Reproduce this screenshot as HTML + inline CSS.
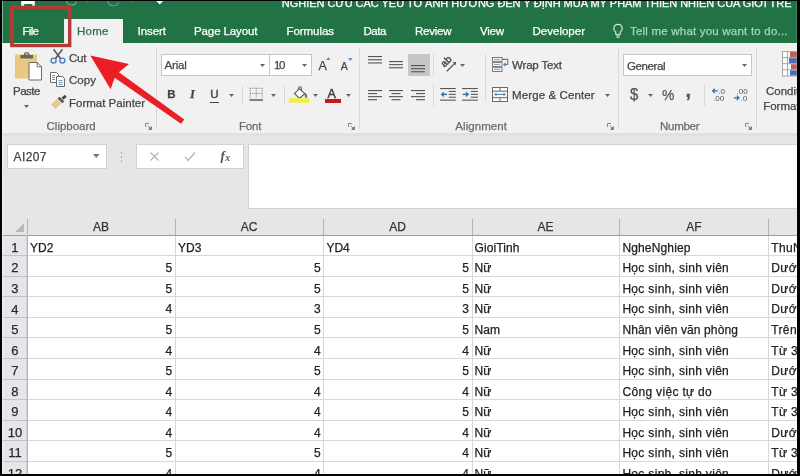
<!DOCTYPE html>
<html lang="vi"><head><meta charset="utf-8"><title>Excel</title><style>
html,body{margin:0;padding:0;background:#000;}
body{width:800px;height:476px;overflow:hidden;position:relative;font-family:"Liberation Sans",sans-serif;}
#app{position:absolute;left:0;top:0;width:797px;height:474px;overflow:hidden;will-change:transform;}
#app div,#app span,.abs{position:absolute;}
span{white-space:nowrap;display:block;-webkit-text-stroke:0.25px currentColor;}
.clip{overflow:hidden;}
svg{display:block;overflow:visible;}
</style></head><body>
<div id="app">
<div style="left:2px;top:1px;width:795px;height:42px;background:#217346;"></div>
<div style="left:2px;top:43px;width:795px;height:90px;background:#f1f1f1;"></div>
<div style="left:2px;top:133px;width:795px;height:3px;background:#e1e1e1;"></div>
<div style="left:2px;top:136px;width:795px;height:100px;background:#e6e6e6;"></div>
<div style="left:2px;top:235px;width:795px;height:239px;background:#fff;"></div>
<div class="clip" style="left:2px;top:1px;width:795px;height:18px;">
<span class="w" style="top:-3.00px;font-size:11px;line-height:11px;color:#fff;left:279.80px;letter-spacing:-0.034px;">NGHIÊN CỨU CÁC YẾU TỐ ẢNH HƯỞNG ĐẾN Ý ĐỊNH MUA MỸ PHẨM THIÊN NHIÊN CỦA GIỚI TRẺ</span>
</div>
<svg class="abs" style="left:0;top:0" width="800" height="20" viewBox="0 0 800 20"><path d="M21.200 1h13.600v4.800h-2.500v-1.800h-8.100v1.800h-3z" fill="#fff"/><path d="M66.500 1a5.200 5.200 0 0 0 10 0.500" fill="none" stroke="#6fae8a" stroke-width="1.100"/><path d="M86.500 1.500h2" stroke="#5c9a78" stroke-width="1"/><path d="M107.500 1a6 6.500 0 0 0 11 1.500" fill="none" stroke="#5fa07c" stroke-width="1.100"/><path d="M131.500 1.500h2" stroke="#4f8f6c" stroke-width="1"/><path d="M156.300 1l3.400 3.600l3.400-3.600z" fill="#fff"/></svg>
<div style="left:64px;top:19px;width:59px;height:24px;background:#f1f1f1;"></div>
<span style="top:26.00px;font-size:11.5px;line-height:11.5px;color:#fff;left:22.50px;letter-spacing:-0.677px;">File</span>
<span style="top:26.00px;font-size:11.5px;line-height:11.5px;color:#36694f;left:77.00px;letter-spacing:0.274px;">Home</span>
<span style="top:26.00px;font-size:11.5px;line-height:11.5px;color:#fff;left:137.50px;letter-spacing:-0.052px;">Insert</span>
<span style="top:26.00px;font-size:11.5px;line-height:11.5px;color:#fff;left:194.00px;letter-spacing:-0.108px;">Page Layout</span>
<span style="top:26.00px;font-size:11.5px;line-height:11.5px;color:#fff;left:286.50px;letter-spacing:-0.061px;">Formulas</span>
<span style="top:26.00px;font-size:11.5px;line-height:11.5px;color:#fff;left:363.50px;letter-spacing:-0.431px;">Data</span>
<span style="top:26.00px;font-size:11.5px;line-height:11.5px;color:#fff;left:415.00px;letter-spacing:-0.241px;">Review</span>
<span style="top:26.00px;font-size:11.5px;line-height:11.5px;color:#fff;left:480.00px;letter-spacing:-0.240px;">View</span>
<span style="top:26.00px;font-size:11.5px;line-height:11.5px;color:#fff;left:532.50px;letter-spacing:0.010px;">Developer</span>
<span style="top:26.00px;font-size:11.5px;line-height:11.5px;color:#a9d6bb;left:630.00px;letter-spacing:0.207px;">Tell me what you want to do...</span>
<svg class="abs" style="left:610px;top:22px" width="16" height="18" viewBox="0 0 16 18"><path d="M8 2.2a4.2 4.2 0 0 0-2.3 7.7v2.3h4.6V9.9A4.2 4.2 0 0 0 8 2.2z" fill="none" stroke="#d6ecdf" stroke-width="1.1"/><path d="M6 13.8h4M6.6 15.4h2.8" stroke="#d6ecdf" stroke-width="1"/></svg>
<div style="left:156px;top:48px;width:1px;height:80.5px;background:#d9d9d9;"></div>
<div style="left:359px;top:48px;width:1px;height:80.5px;background:#d9d9d9;"></div>
<div style="left:618px;top:48px;width:1px;height:80.5px;background:#d9d9d9;"></div>
<div style="left:756px;top:48px;width:1px;height:80.5px;background:#d9d9d9;"></div>
<div style="left:242px;top:86px;width:1px;height:18px;background:#d9d9d9;"></div>
<div style="left:284px;top:86px;width:1px;height:18px;background:#d9d9d9;"></div>
<div style="left:432.5px;top:54px;width:1px;height:22px;background:#d9d9d9;"></div>
<div style="left:432.5px;top:84px;width:1px;height:22px;background:#d9d9d9;"></div>
<div style="left:485px;top:54px;width:1px;height:48px;background:#d9d9d9;"></div>
<div style="left:703.5px;top:84px;width:1px;height:22px;background:#d9d9d9;"></div>
<span style="top:121.00px;font-size:11.5px;line-height:11.5px;color:#6a6a6a;left:46.60px;letter-spacing:-0.028px;">Clipboard</span>
<span style="top:121.00px;font-size:11.5px;line-height:11.5px;color:#6a6a6a;left:239.00px;letter-spacing:-0.171px;">Font</span>
<span style="top:121.00px;font-size:11.5px;line-height:11.5px;color:#6a6a6a;left:455.30px;letter-spacing:0.070px;">Alignment</span>
<span style="top:121.00px;font-size:11.5px;line-height:11.5px;color:#6a6a6a;left:660.00px;letter-spacing:-0.281px;">Number</span>
<svg class="abs" style="left:145px;top:122.600px" width="7" height="7" viewBox="0 0 8 8"><path d="M0.5 4.5V0.5H4.5" fill="none" stroke="#777" stroke-width="1"/><path d="M3 3l4 4M7.4 4.2V7.4H4.2z" stroke="#777" stroke-width="1" fill="#777"/></svg>
<svg class="abs" style="left:348px;top:122.600px" width="7" height="7" viewBox="0 0 8 8"><path d="M0.5 4.5V0.5H4.5" fill="none" stroke="#777" stroke-width="1"/><path d="M3 3l4 4M7.4 4.2V7.4H4.2z" stroke="#777" stroke-width="1" fill="#777"/></svg>
<svg class="abs" style="left:607.2px;top:122.600px" width="7" height="7" viewBox="0 0 8 8"><path d="M0.5 4.5V0.5H4.5" fill="none" stroke="#777" stroke-width="1"/><path d="M3 3l4 4M7.4 4.2V7.4H4.2z" stroke="#777" stroke-width="1" fill="#777"/></svg>
<svg class="abs" style="left:744.8px;top:122.600px" width="7" height="7" viewBox="0 0 8 8"><path d="M0.5 4.5V0.5H4.5" fill="none" stroke="#777" stroke-width="1"/><path d="M3 3l4 4M7.4 4.2V7.4H4.2z" stroke="#777" stroke-width="1" fill="#777"/></svg>
<span style="top:86.00px;font-size:11.5px;line-height:11.5px;color:#444;left:13.00px;letter-spacing:-0.527px;">Paste</span>
<span style="top:53.00px;font-size:11.5px;line-height:11.5px;color:#444;left:69.00px;letter-spacing:-0.198px;">Cut</span>
<span style="top:75.00px;font-size:11.5px;line-height:11.5px;color:#444;left:69.00px;letter-spacing:0.051px;">Copy</span>
<span style="top:98.00px;font-size:11.5px;line-height:11.5px;color:#444;left:69.00px;">Format Painter</span>
<svg class="abs" style="left:23.50px;top:105.00px" width="5" height="3" viewBox="0 0 5 3"><path d="M0 0h5l-2.5 3z" fill="#666"/></svg>
<svg class="abs" style="left:13px;top:49px" width="32" height="34" viewBox="0 0 32 34"><rect x="2" y="5.6" width="22" height="24" rx="1" fill="#ebc87f"/><path d="M7.400 9.400V6h3.400a2.900 2.900 0 0 1 5.800 0H20V9.400z" fill="#666"/><circle cx="13.700" cy="4.900" r="1.100" fill="#ebc87f"/><path d="M16 13.5h8.2l4.3 4.3V31H16z" fill="#fff" stroke="#6a6a6a" stroke-width="1"/><path d="M24.2 13.5v4.3h4.3" fill="none" stroke="#6a6a6a" stroke-width="1"/></svg>
<svg class="abs" style="left:49px;top:48px" width="18" height="17" viewBox="0 0 18 17"><path d="M4.5 1.2l7 9.3M13.5 1.2l-7 9.3" stroke="#5a5a5a" stroke-width="1.6" fill="none"/><circle cx="4.6" cy="12.6" r="2.5" fill="none" stroke="#4b7fb8" stroke-width="1.4"/><circle cx="13.4" cy="12.6" r="2.5" fill="none" stroke="#4b7fb8" stroke-width="1.4"/></svg>
<svg class="abs" style="left:49px;top:71px" width="18" height="17" viewBox="0 0 18 17"><path d="M1.5 1.5h6l2 2v8h-8z" fill="#fff" stroke="#6a6a6a" stroke-width="1"/><path d="M7.5 5.5h6l2 2v8h-8z" fill="#fff" stroke="#6a6a6a" stroke-width="1"/><path d="M3 4.5h3M3 6.5h3M3 8.5h3M9.5 9.5h4M9.5 11.5h4M9.5 13.5h4" stroke="#5b86b8" stroke-width="0.9"/></svg>
<svg class="abs" style="left:49px;top:93px" width="19" height="17" viewBox="0 0 19 17"><path d="M2 11.5l6-5.5l4.5 4.5l-6 5.5z" fill="#e8c98d"/><path d="M8.5 5.5l2-1.8l4.8 4.8l-2 1.8z" fill="#555"/><path d="M12.5 4.8l3.2-3l2 2l-3.2 3z" fill="#444"/></svg>
<div style="left:161px;top:54px;width:151px;height:22px;background:#fff;border:1px solid #c6c6c6;box-sizing:border-box;"></div>
<div style="left:269px;top:54px;width:1px;height:22px;background:#c6c6c6;"></div>
<span style="top:60.00px;font-size:11.5px;line-height:11.5px;color:#444;left:164.40px;letter-spacing:-0.127px;">Arial</span>
<span style="top:60.00px;font-size:11.5px;line-height:11.5px;color:#444;left:274.00px;letter-spacing:-1.292px;">10</span>
<svg class="abs" style="left:260.00px;top:64.00px" width="5" height="3" viewBox="0 0 5 3"><path d="M0 0h5l-2.5 3z" fill="#666"/></svg>
<svg class="abs" style="left:302.00px;top:64.00px" width="5" height="3" viewBox="0 0 5 3"><path d="M0 0h5l-2.5 3z" fill="#666"/></svg>
<span style="top:60.00px;font-size:12.5px;line-height:12.5px;color:#444;left:318.50px;">A</span>
<span style="top:61.00px;font-size:10.5px;line-height:10.5px;color:#444;left:340.80px;">A</span>
<svg class="abs" style="left:325.800px;top:57.400px" width="4.600" height="3" viewBox="0 0 6 4"><path d="M0 4l3-4l3 4z" fill="#5b8fc9"/></svg>
<svg class="abs" style="left:347.800px;top:58px" width="4.600" height="3" viewBox="0 0 6 4"><path d="M0 0h6l-3 4z" fill="#5b8fc9"/></svg>
<span style="top:89.00px;font-size:11.5px;line-height:11.5px;color:#444;left:167.30px;font-weight:bold;">B</span>
<span style="top:88.00px;font-size:12.5px;line-height:12.5px;color:#444;left:190.00px;font-family:'Liberation Serif',serif;font-style:italic;font-weight:bold;">I</span>
<span style="top:89.00px;font-size:11.5px;line-height:11.5px;color:#444;left:210.30px;border-bottom:1px solid #444;padding-bottom:1px;-webkit-text-stroke:0.4px #444;">U</span>
<svg class="abs" style="left:228.50px;top:94.00px" width="5" height="3" viewBox="0 0 5 3"><path d="M0 0h5l-2.5 3z" fill="#666"/></svg>
<svg class="abs" style="left:249px;top:87px" width="16" height="15" viewBox="0 0 16 15"><path d="M1.200 1.200h12M1.200 1.200v10.500M13.200 1.200v10.500M7.200 1.200v10.500M1.200 6.500h12" stroke="#7a7a7a" stroke-width="1" stroke-dasharray="1 1.100" fill="none"/><path d="M0.500 13h13.500" stroke="#444" stroke-width="1.300"/></svg>
<svg class="abs" style="left:270.90px;top:94.00px" width="5" height="3" viewBox="0 0 5 3"><path d="M0 0h5l-2.5 3z" fill="#666"/></svg>
<svg class="abs" style="left:289px;top:85px" width="22" height="20" viewBox="0 0 22 20"><path d="M5.500 8.400l5.200-4.700l5 5l-5.200 4.700z" fill="#fff" stroke="#555" stroke-width="1.100"/><path d="M9.300 5V3.300a1.600 1.600 0 0 1 3.200 0V6.300" fill="none" stroke="#555" stroke-width="1"/><path d="M16 7.200q3.200 3.200 1.900 5.600q-1.900 0.800-2.300-1.800z" fill="#5279a8"/><rect x="0" y="13.200" width="20.100" height="4.500" fill="#f1f03a"/></svg>
<svg class="abs" style="left:313.00px;top:94.00px" width="5" height="3" viewBox="0 0 5 3"><path d="M0 0h5l-2.5 3z" fill="#666"/></svg>
<span style="top:88.00px;font-size:12.5px;line-height:12.5px;color:#444;left:327.60px;-webkit-text-stroke:0.5px #444;">A</span>
<div style="left:325px;top:98.5px;width:15.9px;height:4px;background:#c8171e;"></div>
<svg class="abs" style="left:346.30px;top:94.00px" width="5" height="3" viewBox="0 0 5 3"><path d="M0 0h5l-2.5 3z" fill="#666"/></svg>
<div style="left:407.5px;top:54px;width:22px;height:21.5px;background:#c6c6c6;"></div>
<svg class="abs" style="left:368px;top:56.2px" width="14" height="10.6" viewBox="0 0 14 10.6"><rect x="0" y="0.00" width="14" height="1.1" fill="#555"/><rect x="0" y="3.20" width="14" height="1.1" fill="#555"/><rect x="0" y="6.40" width="14" height="1.1" fill="#555"/></svg>
<svg class="abs" style="left:389.3px;top:61px" width="14" height="10.3" viewBox="0 0 14 10.3"><rect x="0" y="0.00" width="14" height="1.1" fill="#555"/><rect x="0" y="3.10" width="14" height="1.1" fill="#555"/><rect x="0" y="6.20" width="14" height="1.1" fill="#555"/></svg>
<svg class="abs" style="left:411.3px;top:65.2px" width="14" height="10.3" viewBox="0 0 14 10.3"><rect x="0" y="0.00" width="14" height="1.1" fill="#555"/><rect x="0" y="3.10" width="14" height="1.1" fill="#555"/><rect x="0" y="6.20" width="14" height="1.1" fill="#555"/></svg>
<svg class="abs" style="left:368px;top:90.2px" width="14" height="13.2" viewBox="0 0 14 13.2"><rect x="0" y="0.00" width="14" height="1.1" fill="#555"/><rect x="0" y="3.05" width="9" height="1.1" fill="#555"/><rect x="0" y="6.10" width="14" height="1.1" fill="#555"/><rect x="0" y="9.15" width="9" height="1.1" fill="#555"/></svg>
<svg class="abs" style="left:389.3px;top:90.2px" width="14" height="13.2" viewBox="0 0 14 13.2"><rect x="0.0" y="0.00" width="14" height="1.1" fill="#555"/><rect x="2.5" y="3.05" width="9" height="1.1" fill="#555"/><rect x="0.0" y="6.10" width="14" height="1.1" fill="#555"/><rect x="2.5" y="9.15" width="9" height="1.1" fill="#555"/></svg>
<svg class="abs" style="left:411px;top:90.2px" width="14" height="13.2" viewBox="0 0 14 13.2"><rect x="0" y="0.00" width="14" height="1.1" fill="#555"/><rect x="5" y="3.05" width="9" height="1.1" fill="#555"/><rect x="0" y="6.10" width="14" height="1.1" fill="#555"/><rect x="5" y="9.15" width="9" height="1.1" fill="#555"/></svg>
<svg class="abs" style="left:436px;top:52px" width="24" height="24" viewBox="436 52 24 24"><text x="0" y="0" font-size="10" font-family="Liberation Sans, sans-serif" fill="#505050" stroke="#505050" stroke-width="0.500" transform="translate(444.600 67.800) rotate(-45)">ab</text><path d="M446.800 71.300L455 63.100" stroke="#555" stroke-width="1.300" fill="none"/><path d="M456.300 61.800l-3.600 0.800l2.800 2.800z" fill="#555"/></svg>
<svg class="abs" style="left:460.30px;top:63.80px" width="5" height="3" viewBox="0 0 5 3"><path d="M0 0h5l-2.5 3z" fill="#666"/></svg>
<svg class="abs" style="left:440.2px;top:88.300px" width="15.8" height="13" viewBox="0 0 15.8 13"><rect x="0" y="0" width="15.8" height="1.100" fill="#5a5a5a"/><rect x="8.800" y="2.9" width="7.0" height="1.100" fill="#5a5a5a"/><rect x="8.800" y="5.8" width="7.0" height="1.100" fill="#5a5a5a"/><rect x="8.800" y="8.7" width="7.0" height="1.100" fill="#5a5a5a"/><rect x="0" y="11.6" width="15.8" height="1.100" fill="#5a5a5a"/><path d="M7 6.350H2.500" stroke="#3f6fa3" stroke-width="1.500" fill="none"/><path d="M0.600 6.350l3.300-2.900v5.800z" fill="#3f6fa3"/></svg>
<svg class="abs" style="left:461.9px;top:88.300px" width="15.8" height="13" viewBox="0 0 15.8 13"><rect x="0" y="0" width="15.8" height="1.100" fill="#5a5a5a"/><rect x="8.800" y="2.9" width="7.0" height="1.100" fill="#5a5a5a"/><rect x="8.800" y="5.8" width="7.0" height="1.100" fill="#5a5a5a"/><rect x="8.800" y="8.7" width="7.0" height="1.100" fill="#5a5a5a"/><rect x="0" y="11.6" width="15.8" height="1.100" fill="#5a5a5a"/><path d="M0.600 6.350H5" stroke="#3f6fa3" stroke-width="1.500" fill="none"/><path d="M7.200 6.350l-3.300-2.900v5.800z" fill="#3f6fa3"/></svg>
<svg class="abs" style="left:492px;top:56.500px" width="18" height="16" viewBox="0 0 18 16"><rect x="0.500" y="0.500" width="9.500" height="3.800" fill="#fafafa" stroke="#6e6e6e" stroke-width="0.900"/><rect x="0.500" y="5.600" width="9.500" height="3.800" fill="#fafafa" stroke="#6e6e6e" stroke-width="0.900"/><rect x="0.500" y="10.700" width="9.500" height="3.800" fill="#fafafa" stroke="#6e6e6e" stroke-width="0.900"/><path d="M2 2.400h6M2 7.500h6M2 12.600h6" stroke="#8a8a8a" stroke-width="0.800"/><path d="M10 2.400h5.800v5.100h-3.600" fill="none" stroke="#4f7fae" stroke-width="1.100"/><path d="M11 7.500l2.600-2.300v4.600z" fill="#4f7fae"/></svg>
<span style="top:60.00px;font-size:11.5px;line-height:11.5px;color:#444;left:512.00px;letter-spacing:-0.168px;">Wrap Text</span>
<svg class="abs" style="left:492px;top:87px" width="16" height="15" viewBox="0 0 16 15"><rect x="0.500" y="0.500" width="15" height="14" fill="#fafafa" stroke="#6a6a6a" stroke-width="1"/><path d="M0.500 4.200h15M0.500 10.700h15M8 0.500v3.700M8 10.700v3.800" stroke="#6a6a6a" stroke-width="1" fill="none"/><path d="M3.500 7.450h9" stroke="#4f7fae" stroke-width="1" fill="none"/><path d="M2.200 7.450l2.200-1.900v3.800zM13.800 7.450l-2.200-1.900v3.800z" fill="#4f7fae"/></svg>
<span style="top:90.00px;font-size:11.5px;line-height:11.5px;color:#444;left:512.00px;letter-spacing:0.117px;">Merge &amp; Center</span>
<svg class="abs" style="left:604.50px;top:94.00px" width="5" height="3" viewBox="0 0 5 3"><path d="M0 0h5l-2.5 3z" fill="#666"/></svg>
<div style="left:623px;top:54px;width:128.5px;height:22px;background:#fff;border:1px solid #c6c6c6;box-sizing:border-box;"></div>
<span style="top:61.00px;font-size:11.5px;line-height:11.5px;color:#444;left:627.00px;letter-spacing:-0.402px;">General</span>
<svg class="abs" style="left:741.50px;top:64.00px" width="5" height="3" viewBox="0 0 5 3"><path d="M0 0h5l-2.5 3z" fill="#666"/></svg>
<span style="top:87.00px;font-size:16px;line-height:16px;color:#555;left:630.00px;transform:scaleX(0.93);transform-origin:0 0;">$</span>
<svg class="abs" style="left:648.00px;top:94.00px" width="5" height="3" viewBox="0 0 5 3"><path d="M0 0h5l-2.5 3z" fill="#666"/></svg>
<span style="top:88.00px;font-size:14.5px;line-height:14.5px;color:#555;left:661.60px;transform:scaleX(0.96);transform-origin:0 0;">%</span>
<span style="top:80.00px;font-size:20px;line-height:20px;color:#555;left:685.50px;font-weight:bold;">,</span>
<svg class="abs" style="left:711px;top:86px" width="17" height="17" viewBox="0 0 17 17"><path d="M6.8 4.800H1.600M3.800 2.600l-2.200 2.200l2.200 2.200" stroke="#2f6db5" stroke-width="1.200" fill="none"/><text x="7.200" y="8" font-size="8" font-family="Liberation Sans, sans-serif" fill="#555">.0</text><text x="2" y="14.800" font-size="8" font-family="Liberation Sans, sans-serif" fill="#555">.00</text></svg>
<svg class="abs" style="left:732.500px;top:86px" width="17" height="17" viewBox="0 0 17 17"><text x="3.500" y="8" font-size="8" font-family="Liberation Sans, sans-serif" fill="#555">.00</text><path d="M0.800 11.800H6M3.800 9.600l2.200 2.200l-2.200 2.200" stroke="#2f6db5" stroke-width="1.200" fill="none"/><text x="7.500" y="14.800" font-size="8" font-family="Liberation Sans, sans-serif" fill="#555">.0</text></svg>
<div class="clip" style="left:757px;top:43px;width:40px;height:90px;">
<svg class="abs" style="left:25px;top:7.500px" width="16" height="26" viewBox="0 0 16 26"><rect x="0.500" y="0.500" width="15" height="24.500" fill="#fff" stroke="#a5a5a5" stroke-width="1"/><path d="M0.500 6.600h15M0.500 12.700h15M0.500 18.800h15M5.500 0.500v24.500" stroke="#a5a5a5" stroke-width="1"/><rect x="8" y="1" width="8" height="5.100" fill="#c0605a"/><rect x="7" y="7.100" width="9" height="5.100" fill="#4a72b0"/><rect x="9" y="13.200" width="7" height="5.100" fill="#c0605a"/><rect x="8" y="19.300" width="8" height="5.200" fill="#4a72b0"/></svg>
<span style="top:43.00px;font-size:11.5px;line-height:11.5px;color:#444;left:9.00px;">Conditional</span>
<span style="top:58.00px;font-size:11.5px;line-height:11.5px;color:#444;left:6.20px;">Formatting</span>
</div>
<div style="left:7px;top:144px;width:100px;height:25px;background:#fff;border:1px solid #d2d2d2;box-sizing:border-box;"></div>
<span style="top:151.00px;font-size:12px;line-height:12px;color:#444;left:13.50px;letter-spacing:0.410px;">AI207</span>
<svg class="abs" style="left:93.45px;top:153.60px" width="6.5" height="4" viewBox="0 0 6.5 4"><path d="M0 0h6.5l-3.25 4z" fill="#777"/></svg>
<div style="left:121px;top:152.4px;width:1.4px;height:1.4px;background:#aaa;"></div>
<div style="left:121px;top:156.4px;width:1.4px;height:1.4px;background:#aaa;"></div>
<div style="left:121px;top:160.4px;width:1.4px;height:1.4px;background:#aaa;"></div>
<div style="left:136px;top:144px;width:108px;height:25px;background:#fff;border:1px solid #d2d2d2;box-sizing:border-box;"></div>
<svg class="abs" style="left:149px;top:150px" width="90" height="14" viewBox="0 0 90 14"><path d="M1.500 2.500l8 8M9.500 2.500l-8 8" stroke="#b4b4b4" stroke-width="1.200" fill="none"/><path d="M36 7l3.200 3.500l6.800-8" stroke="#b4b4b4" stroke-width="1.200" fill="none"/><text x="71.500" y="9.800" font-size="13" font-style="italic" font-weight="bold" font-family="Liberation Serif, serif" fill="#505050">f</text><text x="76.300" y="11" font-size="9.500" font-style="italic" font-weight="bold" font-family="Liberation Serif, serif" fill="#505050">x</text></svg>
<div style="left:247.5px;top:144px;width:550px;height:64.5px;background:#fff;border:1px solid #d2d2d2;border-right:none;box-sizing:border-box;"></div>
<div style="left:2px;top:218.5px;width:795px;height:16.5px;background:#e6e6e6;"></div>
<div style="left:2px;top:234.5px;width:795px;height:1px;background:#9f9f9f;"></div>
<svg class="abs" style="left:14px;top:222px" width="11" height="11" viewBox="0 0 11 11"><path d="M10 1v9H1z" fill="#b8b8b8"/></svg>
<div style="left:27px;top:219px;width:1px;height:16px;background:#b5b5b5;"></div>
<div style="left:175px;top:219px;width:1px;height:16px;background:#b5b5b5;"></div>
<div style="left:323px;top:219px;width:1px;height:16px;background:#b5b5b5;"></div>
<div style="left:472px;top:219px;width:1px;height:16px;background:#b5b5b5;"></div>
<div style="left:619px;top:219px;width:1px;height:16px;background:#b5b5b5;"></div>
<div style="left:768px;top:219px;width:1px;height:16px;background:#b5b5b5;"></div>
<span style="top:221.00px;font-size:12px;line-height:12px;color:#333;left:93.00px;">AB</span>
<span style="top:221.00px;font-size:12px;line-height:12px;color:#333;left:240.86px;">AC</span>
<span style="top:221.00px;font-size:12px;line-height:12px;color:#333;left:389.16px;">AD</span>
<span style="top:221.00px;font-size:12px;line-height:12px;color:#333;left:537.50px;">AE</span>
<span style="top:221.00px;font-size:12px;line-height:12px;color:#333;left:686.13px;">AF</span>
<div style="left:2px;top:235.5px;width:24px;height:239px;background:#e4e6ea;"></div>
<div style="left:26px;top:235px;width:1px;height:239px;background:#d2d4d8;"></div>
<div style="left:27px;top:235px;width:1px;height:239px;background:#b3b5b9;"></div>
<div style="left:28px;top:255px;width:769px;height:1px;background:#d8d8d8;"></div>
<div style="left:2px;top:255px;width:25px;height:1px;background:#c4c4c4;"></div>
<div style="left:28px;top:276px;width:769px;height:1px;background:#d8d8d8;"></div>
<div style="left:2px;top:276px;width:25px;height:1px;background:#c4c4c4;"></div>
<div style="left:28px;top:296px;width:769px;height:1px;background:#d8d8d8;"></div>
<div style="left:2px;top:296px;width:25px;height:1px;background:#c4c4c4;"></div>
<div style="left:28px;top:317px;width:769px;height:1px;background:#d8d8d8;"></div>
<div style="left:2px;top:317px;width:25px;height:1px;background:#c4c4c4;"></div>
<div style="left:28px;top:337px;width:769px;height:1px;background:#d8d8d8;"></div>
<div style="left:2px;top:337px;width:25px;height:1px;background:#c4c4c4;"></div>
<div style="left:28px;top:358px;width:769px;height:1px;background:#d8d8d8;"></div>
<div style="left:2px;top:358px;width:25px;height:1px;background:#c4c4c4;"></div>
<div style="left:28px;top:379px;width:769px;height:1px;background:#d8d8d8;"></div>
<div style="left:2px;top:379px;width:25px;height:1px;background:#c4c4c4;"></div>
<div style="left:28px;top:399px;width:769px;height:1px;background:#d8d8d8;"></div>
<div style="left:2px;top:399px;width:25px;height:1px;background:#c4c4c4;"></div>
<div style="left:28px;top:420px;width:769px;height:1px;background:#d8d8d8;"></div>
<div style="left:2px;top:420px;width:25px;height:1px;background:#c4c4c4;"></div>
<div style="left:28px;top:440px;width:769px;height:1px;background:#d8d8d8;"></div>
<div style="left:2px;top:440px;width:25px;height:1px;background:#c4c4c4;"></div>
<div style="left:28px;top:461px;width:769px;height:1px;background:#d8d8d8;"></div>
<div style="left:2px;top:461px;width:25px;height:1px;background:#c4c4c4;"></div>
<div style="left:175px;top:236px;width:1px;height:238px;background:#d8d8d8;"></div>
<div style="left:323px;top:236px;width:1px;height:238px;background:#d8d8d8;"></div>
<div style="left:472px;top:236px;width:1px;height:238px;background:#d8d8d8;"></div>
<div style="left:619px;top:236px;width:1px;height:238px;background:#d8d8d8;"></div>
<div style="left:768px;top:236px;width:1px;height:238px;background:#d8d8d8;"></div>
<span style="top:241.00px;font-size:13px;line-height:13px;color:#2a2a2a;left:11.28px;">1</span>
<span style="top:261.00px;font-size:13px;line-height:13px;color:#2a2a2a;left:11.28px;">2</span>
<span style="top:282.00px;font-size:13px;line-height:13px;color:#2a2a2a;left:11.28px;">3</span>
<span style="top:303.00px;font-size:13px;line-height:13px;color:#2a2a2a;left:11.28px;">4</span>
<span style="top:323.00px;font-size:13px;line-height:13px;color:#2a2a2a;left:11.28px;">5</span>
<span style="top:344.00px;font-size:13px;line-height:13px;color:#2a2a2a;left:11.28px;">6</span>
<span style="top:364.00px;font-size:13px;line-height:13px;color:#2a2a2a;left:11.28px;">7</span>
<span style="top:385.00px;font-size:13px;line-height:13px;color:#2a2a2a;left:11.28px;">8</span>
<span style="top:405.00px;font-size:13px;line-height:13px;color:#2a2a2a;left:11.28px;">9</span>
<span style="top:426.00px;font-size:13px;line-height:13px;color:#2a2a2a;left:7.67px;">10</span>
<span style="top:446.00px;font-size:13px;line-height:13px;color:#2a2a2a;left:8.15px;">11</span>
<span style="top:467.00px;font-size:13px;line-height:13px;color:#2a2a2a;left:7.67px;">12</span>
<span style="top:242.00px;font-size:12px;line-height:12px;color:#222;left:30.00px;">YD2</span>
<span style="top:242.00px;font-size:12px;line-height:12px;color:#222;left:178.00px;">YD3</span>
<span style="top:242.00px;font-size:12px;line-height:12px;color:#222;left:326.40px;">YD4</span>
<span style="top:242.00px;font-size:12px;line-height:12px;color:#222;left:474.60px;letter-spacing:0.080px;">GioiTinh</span>
<span style="top:242.00px;font-size:12px;line-height:12px;color:#222;left:622.40px;letter-spacing:0.154px;">NgheNghiep</span>
<span style="top:242.00px;font-size:12px;line-height:12px;color:#222;left:771.20px;letter-spacing:0.400px;">ThuNhap</span>
<span style="top:262.00px;font-size:12px;line-height:12px;color:#222;right:624.80px;">5</span>
<span style="top:262.00px;font-size:12px;line-height:12px;color:#222;right:476.40px;">5</span>
<span style="top:262.00px;font-size:12px;line-height:12px;color:#222;right:328.20px;">5</span>
<span style="top:262.00px;font-size:12px;line-height:12px;color:#222;left:474.60px;">Nữ</span>
<span style="top:262.00px;font-size:12px;line-height:12px;color:#222;left:622.40px;letter-spacing:0.316px;">Học sinh, sinh viên</span>
<span style="top:262.00px;font-size:12px;line-height:12px;color:#222;left:771.20px;letter-spacing:0.400px;">Dưới 3 triệu</span>
<span style="top:283.00px;font-size:12px;line-height:12px;color:#222;right:624.80px;">5</span>
<span style="top:283.00px;font-size:12px;line-height:12px;color:#222;right:476.40px;">5</span>
<span style="top:283.00px;font-size:12px;line-height:12px;color:#222;right:328.20px;">5</span>
<span style="top:283.00px;font-size:12px;line-height:12px;color:#222;left:474.60px;">Nữ</span>
<span style="top:283.00px;font-size:12px;line-height:12px;color:#222;left:622.40px;letter-spacing:0.316px;">Học sinh, sinh viên</span>
<span style="top:283.00px;font-size:12px;line-height:12px;color:#222;left:771.20px;letter-spacing:0.400px;">Dưới 3 triệu</span>
<span style="top:303.00px;font-size:12px;line-height:12px;color:#222;right:624.80px;">4</span>
<span style="top:303.00px;font-size:12px;line-height:12px;color:#222;right:476.40px;">3</span>
<span style="top:303.00px;font-size:12px;line-height:12px;color:#222;right:328.20px;">3</span>
<span style="top:303.00px;font-size:12px;line-height:12px;color:#222;left:474.60px;">Nữ</span>
<span style="top:303.00px;font-size:12px;line-height:12px;color:#222;left:622.40px;letter-spacing:0.316px;">Học sinh, sinh viên</span>
<span style="top:303.00px;font-size:12px;line-height:12px;color:#222;left:771.20px;letter-spacing:0.400px;">Dưới 3 triệu</span>
<span style="top:324.00px;font-size:12px;line-height:12px;color:#222;right:624.80px;">5</span>
<span style="top:324.00px;font-size:12px;line-height:12px;color:#222;right:476.40px;">5</span>
<span style="top:324.00px;font-size:12px;line-height:12px;color:#222;right:328.20px;">5</span>
<span style="top:324.00px;font-size:12px;line-height:12px;color:#222;left:474.60px;">Nam</span>
<span style="top:324.00px;font-size:12px;line-height:12px;color:#222;left:622.40px;letter-spacing:0.115px;">Nhân viên văn phòng</span>
<span style="top:324.00px;font-size:12px;line-height:12px;color:#222;left:771.20px;letter-spacing:0.400px;">Trên 10 triệu</span>
<span style="top:345.00px;font-size:12px;line-height:12px;color:#222;right:624.80px;">4</span>
<span style="top:345.00px;font-size:12px;line-height:12px;color:#222;right:476.40px;">4</span>
<span style="top:345.00px;font-size:12px;line-height:12px;color:#222;right:328.20px;">4</span>
<span style="top:345.00px;font-size:12px;line-height:12px;color:#222;left:474.60px;">Nữ</span>
<span style="top:345.00px;font-size:12px;line-height:12px;color:#222;left:622.40px;letter-spacing:0.316px;">Học sinh, sinh viên</span>
<span style="top:345.00px;font-size:12px;line-height:12px;color:#222;left:771.20px;letter-spacing:0.400px;">Từ 3 - 5 triệu</span>
<span style="top:365.00px;font-size:12px;line-height:12px;color:#222;right:624.80px;">5</span>
<span style="top:365.00px;font-size:12px;line-height:12px;color:#222;right:476.40px;">5</span>
<span style="top:365.00px;font-size:12px;line-height:12px;color:#222;right:328.20px;">5</span>
<span style="top:365.00px;font-size:12px;line-height:12px;color:#222;left:474.60px;">Nữ</span>
<span style="top:365.00px;font-size:12px;line-height:12px;color:#222;left:622.40px;letter-spacing:0.316px;">Học sinh, sinh viên</span>
<span style="top:365.00px;font-size:12px;line-height:12px;color:#222;left:771.20px;letter-spacing:0.400px;">Dưới 3 triệu</span>
<span style="top:386.00px;font-size:12px;line-height:12px;color:#222;right:624.80px;">4</span>
<span style="top:386.00px;font-size:12px;line-height:12px;color:#222;right:476.40px;">4</span>
<span style="top:386.00px;font-size:12px;line-height:12px;color:#222;right:328.20px;">4</span>
<span style="top:386.00px;font-size:12px;line-height:12px;color:#222;left:474.60px;">Nữ</span>
<span style="top:386.00px;font-size:12px;line-height:12px;color:#222;left:622.40px;letter-spacing:0.332px;">Công việc tự do</span>
<span style="top:386.00px;font-size:12px;line-height:12px;color:#222;left:771.20px;letter-spacing:0.400px;">Từ 3 - 5 triệu</span>
<span style="top:406.00px;font-size:12px;line-height:12px;color:#222;right:624.80px;">4</span>
<span style="top:406.00px;font-size:12px;line-height:12px;color:#222;right:476.40px;">4</span>
<span style="top:406.00px;font-size:12px;line-height:12px;color:#222;right:328.20px;">5</span>
<span style="top:406.00px;font-size:12px;line-height:12px;color:#222;left:474.60px;">Nữ</span>
<span style="top:406.00px;font-size:12px;line-height:12px;color:#222;left:622.40px;letter-spacing:0.316px;">Học sinh, sinh viên</span>
<span style="top:406.00px;font-size:12px;line-height:12px;color:#222;left:771.20px;letter-spacing:0.400px;">Từ 3 - 5 triệu</span>
<span style="top:427.00px;font-size:12px;line-height:12px;color:#222;right:624.80px;">4</span>
<span style="top:427.00px;font-size:12px;line-height:12px;color:#222;right:476.40px;">4</span>
<span style="top:427.00px;font-size:12px;line-height:12px;color:#222;right:328.20px;">4</span>
<span style="top:427.00px;font-size:12px;line-height:12px;color:#222;left:474.60px;">Nữ</span>
<span style="top:427.00px;font-size:12px;line-height:12px;color:#222;left:622.40px;letter-spacing:0.316px;">Học sinh, sinh viên</span>
<span style="top:427.00px;font-size:12px;line-height:12px;color:#222;left:771.20px;letter-spacing:0.400px;">Dưới 3 triệu</span>
<span style="top:447.00px;font-size:12px;line-height:12px;color:#222;right:624.80px;">5</span>
<span style="top:447.00px;font-size:12px;line-height:12px;color:#222;right:476.40px;">5</span>
<span style="top:447.00px;font-size:12px;line-height:12px;color:#222;right:328.20px;">4</span>
<span style="top:447.00px;font-size:12px;line-height:12px;color:#222;left:474.60px;">Nữ</span>
<span style="top:447.00px;font-size:12px;line-height:12px;color:#222;left:622.40px;letter-spacing:0.316px;">Học sinh, sinh viên</span>
<span style="top:447.00px;font-size:12px;line-height:12px;color:#222;left:771.20px;letter-spacing:0.400px;">Từ 3 - 5 triệu</span>
<span style="top:468.00px;font-size:12px;line-height:12px;color:#222;right:624.80px;">4</span>
<span style="top:468.00px;font-size:12px;line-height:12px;color:#222;right:476.40px;">4</span>
<span style="top:468.00px;font-size:12px;line-height:12px;color:#222;right:328.20px;">4</span>
<span style="top:468.00px;font-size:12px;line-height:12px;color:#222;left:474.60px;">Nữ</span>
<span style="top:468.00px;font-size:12px;line-height:12px;color:#222;left:622.40px;letter-spacing:0.316px;">Học sinh, sinh viên</span>
<span style="top:468.00px;font-size:12px;line-height:12px;color:#222;left:771.20px;letter-spacing:0.400px;">Dưới 3 triệu</span>
<div style="left:2px;top:1px;width:1px;height:473px;background:rgba(255,255,255,0.45);"></div>
<div style="left:796px;top:1px;width:1px;height:473px;background:rgba(255,255,255,0.12);"></div>
</div>
<svg class="abs" style="left:0;top:0" width="800" height="476" viewBox="0 0 800 476"><rect x="11.800" y="7.600" width="57.900" height="37.900" fill="none" stroke="#b53a35" stroke-width="3.400"/><path d="M90.300 55.600L129 64.100L118.900 72.300L184.300 119.500L181 123.700L114.700 77.700L110.600 89.300Z" fill="#ea1f25"/></svg>
</body></html>
